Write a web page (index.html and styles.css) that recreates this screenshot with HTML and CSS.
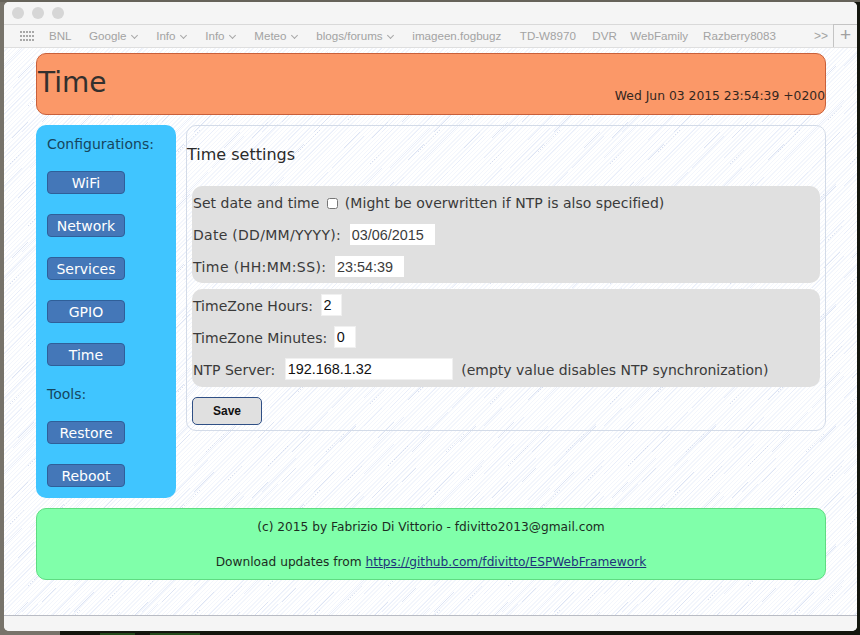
FILE: index.html
```html
<!DOCTYPE html>
<html>
<head>
<title>Time</title>
<link rel="stylesheet" href="styles.css">
</head>
<body>
<div class="window">
    <div class="titlebar">
        <span class="light"></span>
        <span class="light"></span>
        <span class="light"></span>
    </div>
    <div class="favbar">
        <svg class="grid-icon" width="15" height="11" viewBox="0 0 15 11">
            <g fill="#a8a8a8">
                <rect x="0" y="0" width="2" height="2"/><rect x="3" y="0" width="2" height="2"/><rect x="6" y="0" width="2" height="2"/><rect x="9" y="0" width="2" height="2"/><rect x="12" y="0" width="2" height="2"/>
                <rect x="0" y="4" width="2" height="2"/><rect x="3" y="4" width="2" height="2"/><rect x="6" y="4" width="2" height="2"/><rect x="9" y="4" width="2" height="2"/><rect x="12" y="4" width="2" height="2"/>
                <rect x="0" y="8" width="2" height="2"/><rect x="3" y="8" width="2" height="2"/><rect x="6" y="8" width="2" height="2"/><rect x="9" y="8" width="2" height="2"/><rect x="12" y="8" width="2" height="2"/>
            </g>
        </svg>
        <span class="fav fav-bnl">BNL</span>
        <span class="fav">Google <i class="chev"></i></span>
        <span class="fav">Info <i class="chev"></i></span>
        <span class="fav">Info <i class="chev"></i></span>
        <span class="fav">Meteo <i class="chev"></i></span>
        <span class="fav">blogs/forums <i class="chev"></i></span>
        <span class="fav fav-long">imageen.fogbugz</span>
        <span class="fav">TD-W8970</span>
        <span class="fav fav-dvr">DVR</span>
        <span class="fav fav-web">WebFamily</span>
        <span class="fav">Razberry8083</span>
        <span class="more">&gt;&gt;</span>
        <span class="plus">+</span>
    </div>
    <div class="page">
        <div class="header">
            <div class="title">Time</div>
            <div class="clock">Wed Jun 03 2015 23:54:39 +0200</div>
        </div>
        <div class="middle">
            <div class="sidebar">
                <div class="side-label">Configurations:</div>
                <a class="side-btn">WiFi</a>
                <a class="side-btn">Network</a>
                <a class="side-btn">Services</a>
                <a class="side-btn">GPIO</a>
                <a class="side-btn">Time</a>
                <div class="side-label tools">Tools:</div>
                <a class="side-btn">Restore</a>
                <a class="side-btn">Reboot</a>
            </div>
            <div class="content">
                <div class="content-title">Time settings</div>
                <div class="group">
                    <div class="row wide">Set date and time <input class="check" type="checkbox"> (Might be overwritten if NTP is also specified)</div>
                    <div class="row date-row">Date (DD/MM/YYYY): <input class="field date" type="text" value="03/06/2015"></div>
                    <div class="row time-row">Time (HH:MM:SS): <input class="field time" type="text" value="23:54:39"></div>
                </div>
                <div class="group second">
                    <div class="row">TimeZone Hours: <input class="field tz" type="text" value="2"></div>
                    <div class="row">TimeZone Minutes: <input class="field tz mins" type="text" value="0"></div>
                    <div class="row">NTP Server: <input class="field ntp" type="text" value="192.168.1.32"> (empty value disables NTP synchronization)</div>
                </div>
                <input class="save" type="button" value="Save">
            </div>
        </div>
        <div class="footer">
            <div>(c) 2015 by Fabrizio Di Vittorio - fdivitto2013@gmail.com</div>
            <div>Download updates from <a href="#">https://github.com/fdivitto/ESPWebFramework</a></div>
        </div>
    </div>
    <div class="statusbar"></div>
</div>
</body>
</html>
```

FILE: styles.css
```css
html, body {
    margin: 0;
    height: 100%;
    overflow: hidden;
}
body {
    background:
        linear-gradient(90deg, transparent 100px, #244a1c 100px, #244a1c 135px, transparent 135px, transparent 150px, #244a1c 150px, #244a1c 200px, transparent 200px) 0 633px / 100% 2px no-repeat,
        linear-gradient(#66635a, #66635a) 0 0 / 100% 2px no-repeat,
        linear-gradient(90deg, #77736a 0, #77736a 60px, #14160e 60px);
    padding: 2px 3px 4px 4px;
    height: 635px;
    box-sizing: border-box;
}
.window {
    height: 629px;
    display: flex;
    flex-direction: column;
    border-radius: 5px;
    overflow: hidden;
    background: #f5f5f5;
}
.titlebar {
    height: 22px;
    flex: none;
    display: flex;
    align-items: center;
    gap: 8px;
    padding-left: 8px;
    background: #f5f5f5;
    border-bottom: 1px solid #d9d9d9;
}
.light {
    width: 12px;
    height: 12px;
    border-radius: 50%;
    background: #d6d6d6;
}
.favbar {
    height: 22px;
    flex: none;
    display: flex;
    align-items: center;
    position: relative;
    background: #f5f5f5;
    border-bottom: 1px solid #dedede;
    font-family: "Liberation Sans", Arial, sans-serif;
    font-size: 11.6px;
    color: #a3a3a3;
    white-space: nowrap;
    padding-left: 16px;
}
.grid-icon {
    margin-right: 14px;
}
.fav {
    margin-right: 16.5px;
    margin-bottom: 2px;
}
.fav-bnl { margin-right: 17.5px; }
.fav-long { margin-right: 18.5px; }
.fav-dvr { margin-right: 13.5px; }
.fav-web { margin-right: 15px; }
.chev {
    display: inline-block;
    width: 4px;
    height: 4px;
    margin: 0 3px 2px 2px;
    border-right: 1.5px solid #a8a8a8;
    border-bottom: 1.5px solid #a8a8a8;
    transform: rotate(45deg);
}
.more {
    position: absolute;
    right: 29px;
    top: 4px;
    font-size: 12px;
}
.plus {
    position: absolute;
    right: 0;
    top: -1px;
    width: 24px;
    height: 23px;
    box-sizing: border-box;
    border-left: 1px solid #c4c4c4;
    border-top: 1px solid #c4c4c4;
    text-align: center;
    font-size: 19px;
    line-height: 20px;
    color: #a0a0a0;
}
.page {
    flex: 1;
    padding: 5px 31px 0 32px;
    background-color: #fdfeff;
    background-image:
        url("data:image/svg+xml,%3Csvg xmlns='http://www.w3.org/2000/svg' width='120' height='120'%3E%3Cg fill='none' stroke-width='1'%3E%3Cg stroke='%23e9eefa'%3E%3Cpath d='M0 18L18 0M9 40L40 9M30 52L64 18M58 30L84 4M70 58L112 16M0 66L30 36M18 84L52 50M44 92L84 52M76 96L120 52M0 110L34 76M26 120L66 80M60 112L92 80M88 120L120 88'/%3E%3C/g%3E%3Cg stroke='%23dde4f4'%3E%3Cpath d='M14 30L30 14M48 44L66 26M96 34L112 18M8 90L24 74M38 74L52 60M70 84L90 64M100 100L116 84M44 112L60 96'/%3E%3C/g%3E%3Cg stroke='%23c9d3ea' stroke-dasharray='1 2'%3E%3Cpath d='M24 58L44 38M82 44L100 26M54 104L76 82M104 72L118 58M6 116L20 102'/%3E%3C/g%3E%3C/g%3E%3C/svg%3E"),
        repeating-linear-gradient(135deg, #fff 0, #fff 2px, #f3f6fc 2px, #f3f6fc 3px);
    font-family: "DejaVu Sans", Verdana, sans-serif;
    color: #333;
}
.header {
    height: 62px;
    box-sizing: border-box;
    position: relative;
    background: #fb9868;
    border: 1px solid #c9603a;
    border-radius: 10px;
}
.title {
    font-size: 28px;
    line-height: 34px;
    padding-top: 12px;
    padding-left: 1px;
    color: #33302e;
}
.clock {
    position: absolute;
    right: 0;
    bottom: 10px;
    font-size: 12.35px;
    line-height: 15px;
    color: #33261e;
}
.middle {
    display: flex;
    align-items: flex-start;
    margin-top: 10px;
    gap: 10px;
}
.sidebar {
    width: 140px;
    height: 373px;
    flex: none;
    box-sizing: border-box;
    padding: 10px 11px 0;
    background: #40c5ff;
    border-radius: 10px;
}
.side-label {
    font-size: 14px;
    line-height: 18px;
    color: #16465e;
    margin-bottom: 18px;
}
.side-label.tools {
    margin-top: -1px;
}
.side-btn {
    display: block;
    width: 78px;
    height: 23px;
    box-sizing: border-box;
    margin-bottom: 20px;
    background: #4477b8;
    border: 1px solid #2f5f99;
    border-radius: 4px;
    color: #fff;
    text-align: center;
    font-size: 14px;
    line-height: 22px;
}
.content {
    flex: 1;
    height: 306px;
    box-sizing: border-box;
    padding: 0 5px;
    border: 1px solid #d3dbe8;
    border-radius: 10px;
}
.content-title {
    font-size: 16px;
    line-height: 20px;
    margin-top: 19px;
    margin-bottom: 21px;
    margin-left: -5px;
    color: #2a2a2a;
}
.group {
    background: #e0e0e0;
    border-radius: 10px;
    padding: 6px 0 0 1px;
    margin-bottom: 6px;
    font-size: 14px;
    color: #3a3a3a;
}
.group.second {
    padding-bottom: 1px;
    margin-bottom: 10px;
}
.row {
    height: 32px;
    line-height: 22px;
    white-space: nowrap;
}
.row.wide {
    letter-spacing: 0.03px;
}
.date-row {
    letter-spacing: 0.28px;
}
.time-row {
    letter-spacing: 0.42px;
}
.group .row:last-child {
    height: 27px;
}
.check {
    width: 11px;
    height: 11px;
    margin: 0 2px 0 3.5px;
    vertical-align: -1px;
}
.field {
    box-sizing: border-box;
    height: 22px;
    border: 1px solid #f0f0f0;
    background: #fff;
    font-family: "Liberation Sans", Arial, sans-serif;
    font-size: 14.4px;
    color: #111;
    padding: 0 2px;
    margin: -1px 4px 0;
    vertical-align: top;
}
.date, .time {
    height: 21px;
    margin-top: 0;
    border: 0;
    color: #3c3c3c;
}
.date { width: 85px; margin-left: 4px; }
.time { width: 69px; margin-left: 3.5px; }
.tz { width: 21px; margin-left: 3px; }
.tz.mins { width: 22px; margin-left: 2px; }
.ntp { width: 168px; margin-left: 5px; }
.save {
    display: block;
    width: 70px;
    height: 28px;
    box-sizing: border-box;
    background: #e0e0e0;
    border: 1px solid #2f4f85;
    border-radius: 5px;
    font-family: "Liberation Sans", Arial, sans-serif;
    font-weight: bold;
    font-size: 12px;
    color: #111;
    padding: 0;
}
.footer {
    margin-top: 10px;
    height: 72px;
    box-sizing: border-box;
    background: #80ffaa;
    border: 1px solid #5fdc82;
    border-radius: 10px;
    text-align: center;
    font-size: 12.2px;
    line-height: 17px;
    padding-top: 10px;
    color: #1c2c22;
}
.footer div + div {
    margin-top: 18px;
}
.footer a {
    color: #20337a;
}
.statusbar {
    height: 15px;
    flex: none;
    background: #f5f5f5;
    border-top: 1px solid #b9bcc4;
}
```
